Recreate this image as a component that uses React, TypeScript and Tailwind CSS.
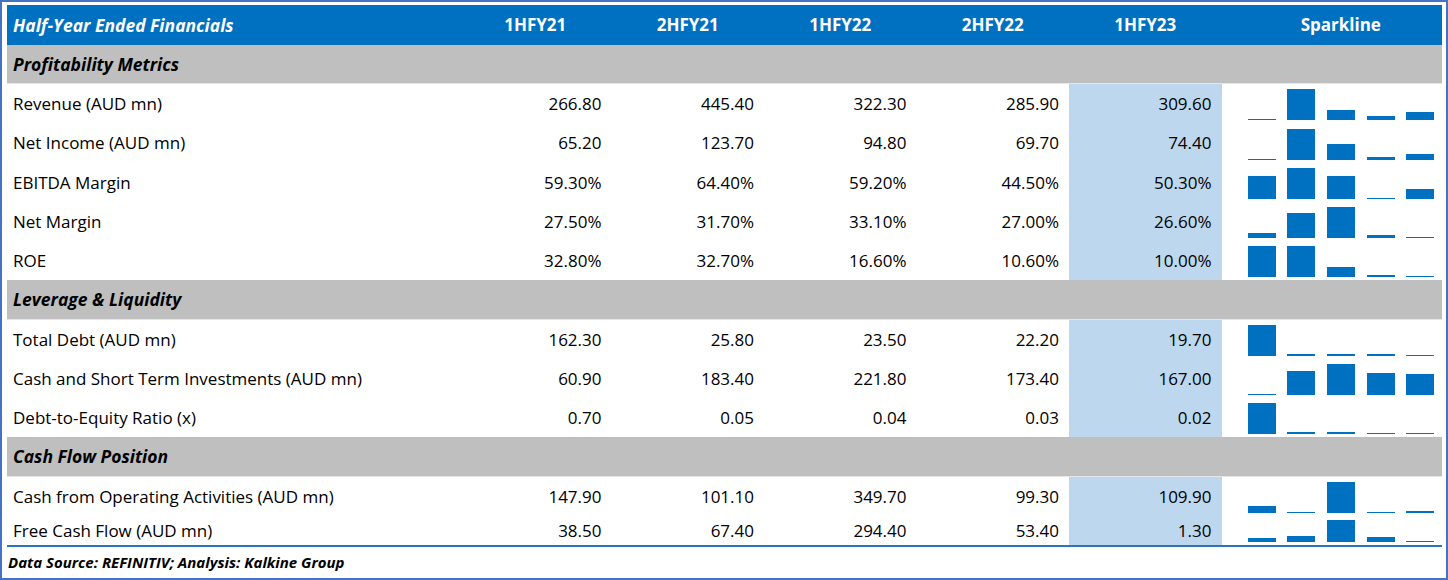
const years = ["1HFY21", "2HFY21", "1HFY22", "2HFY22", "1HFY23"];

type Row = {
  label: string;
  values: number[];
  fmt: "num" | "pct";
  h: string;
  barH: number;
};

type Section = { title: string; h: string; rows: Row[] };

const sections: Section[] = [
  {
    title: "Profitability Metrics",
    h: "h-[39px]",
    rows: [
      { label: "Revenue (AUD mn)", values: [266.8, 445.4, 322.3, 285.9, 309.6], fmt: "num", h: "h-[39px]", barH: 31 },
      { label: "Net Income (AUD mn)", values: [65.2, 123.7, 94.8, 69.7, 74.4], fmt: "num", h: "h-[40px]", barH: 31 },
      { label: "EBITDA Margin", values: [59.3, 64.4, 59.2, 44.5, 50.3], fmt: "pct", h: "h-[39px]", barH: 31 },
      { label: "Net Margin", values: [27.5, 31.7, 33.1, 27.0, 26.6], fmt: "pct", h: "h-[39px]", barH: 31 },
      { label: "ROE", values: [32.8, 32.7, 16.6, 10.6, 10.0], fmt: "pct", h: "h-[39px]", barH: 31 },
    ],
  },
  {
    title: "Leverage & Liquidity",
    h: "h-[40px]",
    rows: [
      { label: "Total Debt (AUD mn)", values: [162.3, 25.8, 23.5, 22.2, 19.7], fmt: "num", h: "h-[39px]", barH: 31 },
      { label: "Cash and Short Term Investments (AUD mn)", values: [60.9, 183.4, 221.8, 173.4, 167.0], fmt: "num", h: "h-[39px]", barH: 31 },
      { label: "Debt-to-Equity Ratio (x)", values: [0.7, 0.05, 0.04, 0.03, 0.02], fmt: "num", h: "h-[39px]", barH: 31 },
    ],
  },
  {
    title: "Cash Flow Position",
    h: "h-[40px]",
    rows: [
      { label: "Cash from Operating Activities (AUD mn)", values: [147.9, 101.1, 349.7, 99.3, 109.9], fmt: "num", h: "h-[39px]", barH: 31 },
      { label: "Free Cash Flow (AUD mn)", values: [38.5, 67.4, 294.4, 53.4, 1.3], fmt: "num", h: "h-[29px]", barH: 22 },
    ],
  },
];

const fmt = (v: number, f: "num" | "pct") => (f === "pct" ? v.toFixed(2) + "%" : v.toFixed(2));

const Sparkline = ({ values, max }: { values: number[]; max: number }) => {
  const lo = Math.min(...values);
  const hi = Math.max(...values);
  return (
    <div className="flex h-full items-end gap-[11.7px] pl-[26px] pb-[3px]">
      {values.map((v, i) => {
        const h = 1 + ((v - lo) / (hi - lo)) * (max - 1);
        return <div key={i} className="w-[28px] bg-[#0070c0]" style={{ height: `${h}px` }} />;
      })}
    </div>
  );
};

export default function App() {
  return (
    <div
      className="w-[1448px] h-[580px] overflow-hidden border-2 border-[#4472c4] bg-white pl-[5px] pt-[3px] text-black"
      style={{ fontFamily: '"Open Sans", "Liberation Sans", sans-serif' }}
    >
      <div className="w-[1435px]">
        {/* header */}
        <div className="grid h-[40px] grid-cols-[452px_repeat(5,152.5px)_1fr] items-center bg-[#0070c0] text-[17px] font-bold text-white">
          <div className="pl-[6px] text-[17.5px] italic">Half-Year Ended Financials</div>
          {years.map((y) => (
            <div key={y} className="text-center">
              {y}
            </div>
          ))}
          <div className="pl-[18px] text-center">Sparkline</div>
        </div>

        {sections.map((s) => (
          <div key={s.title}>
            <div className={`flex ${s.h} items-center border-b border-[#e6e6e6] bg-[#bfbfbf] pl-[6px] text-[17.5px] font-bold italic`}>
              {s.title}
            </div>
            {s.rows.map((r) => (
              <div key={r.label} className={`grid ${r.h} grid-cols-[452px_repeat(5,152.5px)_1fr] text-[17px]`}>
                <div className="flex items-center pl-[6px]">{r.label}</div>
                {r.values.map((v, i) => (
                  <div
                    key={i}
                    className={`flex items-center justify-end pr-[10px] ${i === 4 ? "bg-[#bdd7ee]" : ""}`}
                  >
                    {fmt(v, r.fmt)}
                  </div>
                ))}
                <Sparkline values={r.values} max={r.barH} />
              </div>
            ))}
          </div>
        ))}

        <div className="h-[2px] bg-[#2e75b6]" />
        <div className="flex h-[31px] items-center pl-[1px] text-[15px] font-bold italic">
          Data Source: REFINITIV; Analysis: Kalkine Group
        </div>
      </div>
    </div>
  );
}
